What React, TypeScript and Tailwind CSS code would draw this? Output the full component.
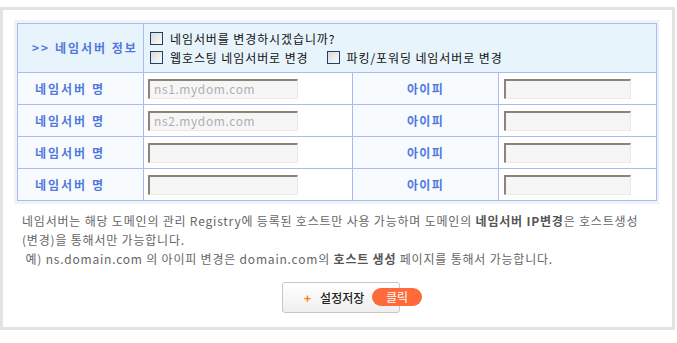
import type { ReactNode } from 'react';

const FONT = { fontFamily: '"Noto Sans CJK KR", "Noto Sans", sans-serif' };

function CheckBox() {
  return (
    <span className="inline-block h-[13px] w-[13px] shrink-0 border border-[#1c416f] bg-gradient-to-br from-[#d9d9d4] to-[#fbfbfb]" />
  );
}

function CheckItem({ label }: { label: string }) {
  return (
    <label className="flex items-center gap-[7px] text-[12px] leading-[14px] tracking-[0.9px] text-[#111]">
      <CheckBox />
      <span>{label}</span>
    </label>
  );
}

function Field({ value, width }: { value?: string; width: string }) {
  return (
    <div
      className={`${width} flex h-[20px] items-center border-t-2 border-l-2 border-r border-b border-t-[#8a8676] border-l-[#8a8676] border-r-[#ebe9e2] border-b-[#ebe9e2] bg-[#f6f6f6] pl-[4px] text-[12px] tracking-[0.6px] text-[#b0b0b0]`}
    >
      {value}
    </div>
  );
}

function Label({ children, center }: { children: ReactNode; center?: boolean }) {
  return (
    <td
      className={`border border-[#a9bbf1] bg-[#f7fbfe] text-[12px] font-bold text-[#5277dc] ${center ? 'text-center tracking-[1.3px]' : 'pl-[17px] text-left tracking-[2px]'}`}
    >
      {children}
    </td>
  );
}

const ROWS = ['ns1.mydom.com', 'ns2.mydom.com', '', ''];

export default function App() {
  return (
    <div className="w-[677px] bg-white pt-[7px]" style={FONT}>
      <div className="h-[323px] w-[675px] border-[3px] border-[#e3e3e3] bg-white">
        <div className="ml-[11px] mt-[10px] w-[645px] bg-[#eef3f7] p-[3px]">
          <table className="w-[639px] table-fixed border-collapse">
            <colgroup>
              <col className="w-[126px]" />
              <col className="w-[209px]" />
              <col className="w-[146px]" />
              <col className="w-[158px]" />
            </colgroup>
            <tbody>
              <tr className="h-[49px]">
                <td className="border border-[#a9bbf1] bg-[#e8f4fb] pl-[14px] text-[12px] font-bold tracking-[2px] text-[#5277dc]">
                  &gt;&gt; 네임서버 정보
                </td>
                <td colSpan={3} className="border border-[#a9bbf1] bg-[#e8f4fb] pl-[6px]">
                  <div className="flex flex-col gap-[5px]">
                    <CheckItem label="네임서버를 변경하시겠습니까?" />
                    <div className="flex items-center gap-[18px]">
                      <CheckItem label="웹호스팅 네임서버로 변경" />
                      <CheckItem label="파킹/포워딩 네임서버로 변경" />
                    </div>
                  </div>
                </td>
              </tr>
              {ROWS.map((v, i) => (
                <tr key={i} className="h-[32px]">
                  <Label>네임서버 명</Label>
                  <td className="border border-[#a9bbf1] bg-white pl-[4px]">
                    <Field value={v} width="w-[150px]" />
                  </td>
                  <Label center>아이피</Label>
                  <td className="border border-[#a9bbf1] bg-white pl-[5px]">
                    <Field width="w-[127px]" />
                  </td>
                </tr>
              ))}
            </tbody>
          </table>
        </div>

        <div className="mt-[7px] pl-[19px] text-[12px] leading-[19px] tracking-[0.8px] text-[#666]">
          <p>
            네임서버는 해당 도메인의 관리 Registry에 등록된 호스트만 사용 가능하며 도메인의{' '}
            <b className="text-[#555]">네임서버 IP변경</b>은 호스트생성
          </p>
          <p>(변경)을 통해서만 가능합니다.</p>
          <p>
            &nbsp;예) ns.domain.com 의 아이피 변경은 domain.com의{' '}
            <b className="text-[#555]">호스트 생성</b> 페이지를 통해서 가능합니다.
          </p>
        </div>

        <div className="mt-[14px] flex justify-center">
          <div className="relative ml-[7px] flex h-[31px] w-[118px] items-center rounded-[3px] border border-[#c6c6c6] bg-gradient-to-b from-white to-[#efefef] pl-[21px]">
            <span className="text-[12px] font-bold text-[#ff7a00]">+</span>
            <span className="ml-[9px] text-[12px] font-medium text-[#222]">설정저장</span>
            <span className="absolute left-[89px] top-[5px] flex h-[18px] w-[50px] items-center justify-center rounded-full bg-[#ff6a3d] text-[12px] text-white">
              클릭
            </span>
          </div>
        </div>
      </div>
    </div>
  );
}
